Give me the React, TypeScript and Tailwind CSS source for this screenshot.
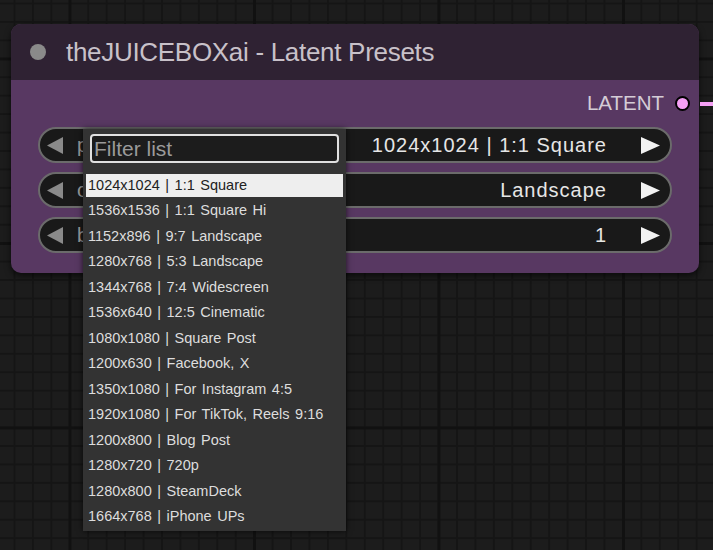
import React from "react";

const presets = [
  "1024x1024 | 1:1 Square",
  "1536x1536 | 1:1 Square Hi",
  "1152x896 | 9:7 Landscape",
  "1280x768 | 5:3 Landscape",
  "1344x768 | 7:4 Widescreen",
  "1536x640 | 12:5 Cinematic",
  "1080x1080 | Square Post",
  "1200x630 | Facebook, X",
  "1350x1080 | For Instagram 4:5",
  "1920x1080 | For TikTok, Reels 9:16",
  "1200x800 | Blog Post",
  "1280x720 | 720p",
  "1280x800 | SteamDeck",
  "1664x768 | iPhone UPs",
];

const widgets = [
  { label: "preset", value: "1024x1024 | 1:1 Square" },
  { label: "orientation", value: "Landscape" },
  { label: "batch_size", value: "1" },
];

const Widget: React.FC<{ label: string; value: string }> = ({ label, value }) => (
  <div className="h-[36px] rounded-full bg-[#191919] border-2 border-[#6b6b6b] flex items-center pl-[7px] pr-[10px]">
    <svg width="17" height="17" viewBox="0 0 17 17" className="shrink-0">
      <polygon points="16,0 16,17 0,8.5" fill="#8a8a8a" />
    </svg>
    {/* label runs under the open menu, only its first glyph shows */}
    <span className="ml-[13px] w-[8px] overflow-hidden whitespace-nowrap text-[20px] text-[#999] tracking-[1px]">
      {label}
    </span>
    <span className="ml-auto text-[20px] text-[#e6e6e6] tracking-[1px]">{value}</span>
    <svg width="19" height="17" viewBox="0 0 19 17" className="shrink-0 ml-[34px]">
      <polygon points="0,0 0,17 19,8.5" fill="#f2f2f2" />
    </svg>
  </div>
);

export default function App() {
  return (
    <div
      className="relative w-[713px] h-[550px] overflow-hidden font-['Liberation_Sans',Arial,sans-serif] bg-[#1c1c1c] bg-[image:linear-gradient(to_right,#111111_3px,transparent_3px),linear-gradient(to_bottom,#111111_3px,transparent_3px),linear-gradient(to_right,#151515_2px,transparent_2px),linear-gradient(to_bottom,#151515_2px,transparent_2px)] bg-[size:184.5px_184.5px,184.5px_184.5px,18.45px_18.45px,18.45px_18.45px] bg-[position:68.5px_57.5px,68.5px_57.5px,13.5px_2.5px,13.5px_2.5px]"
    >
      {/* Node */}
      <div className="absolute left-[11px] top-[24px] w-[688px] h-[249px] rounded-[10px] bg-[#583862] shadow-[0_3px_6px_rgba(0,0,0,0.6)] flex flex-col">
        <div className="h-[56px] rounded-t-[10px] bg-[#2f2233] flex items-center pl-[19px]">
          <div className="w-[16px] h-[16px] rounded-full bg-[#8a8a8a]" />
          <span className="ml-[20px] text-[26px] text-[#c8c1c9] tracking-[-0.3px]">
            theJUICEBOXai - Latent Presets
          </span>
        </div>
        <div className="flex-1 flex flex-col px-[27px]">
          <div className="h-[47px] flex items-center justify-end -mr-[18px]">
            <span className="text-[20.5px] text-[#d4ccd6]">LATENT</span>
            <div className="ml-[11px] w-[15px] h-[15px] rounded-full bg-[#f5a0f5] border-2 border-black" />
          </div>
          <div className="flex flex-col gap-[9px]">
            {widgets.map((w) => (
              <Widget key={w.label} label={w.label} value={w.value} />
            ))}
          </div>
        </div>
      </div>

      {/* Link wire */}
      <div className="absolute left-[700px] top-[102px] w-[13px] h-[4px] bg-[#f5a0f5]" />

      {/* Context menu */}
      <div className="absolute left-[83px] top-[129px] w-[263px] h-[402px] bg-[#333333] shadow-[0_0_6px_rgba(0,0,0,0.7)] px-[3px] pt-[5px]">
        <div className="mx-[4px] h-[29px] rounded-[4px] border-2 border-[#e0e0e0] bg-[#1c1c1c] flex items-center pl-[2px]">
          <span className="text-[21px] text-[#9a9a9a]">Filter list</span>
        </div>
        <div className="mt-[8.5px] flex flex-col">
          {presets.map((p, i) => (
            <div
              key={p}
              className={`h-[23px] mt-[2.5px] flex items-center pl-[2px] text-[14.5px] [word-spacing:1.5px] ${
                i === 0 ? "bg-[#eeeeee] text-[#222]" : "text-[#dddddd]"
              }`}
            >
              {p}
            </div>
          ))}
        </div>
      </div>
    </div>
  );
}
